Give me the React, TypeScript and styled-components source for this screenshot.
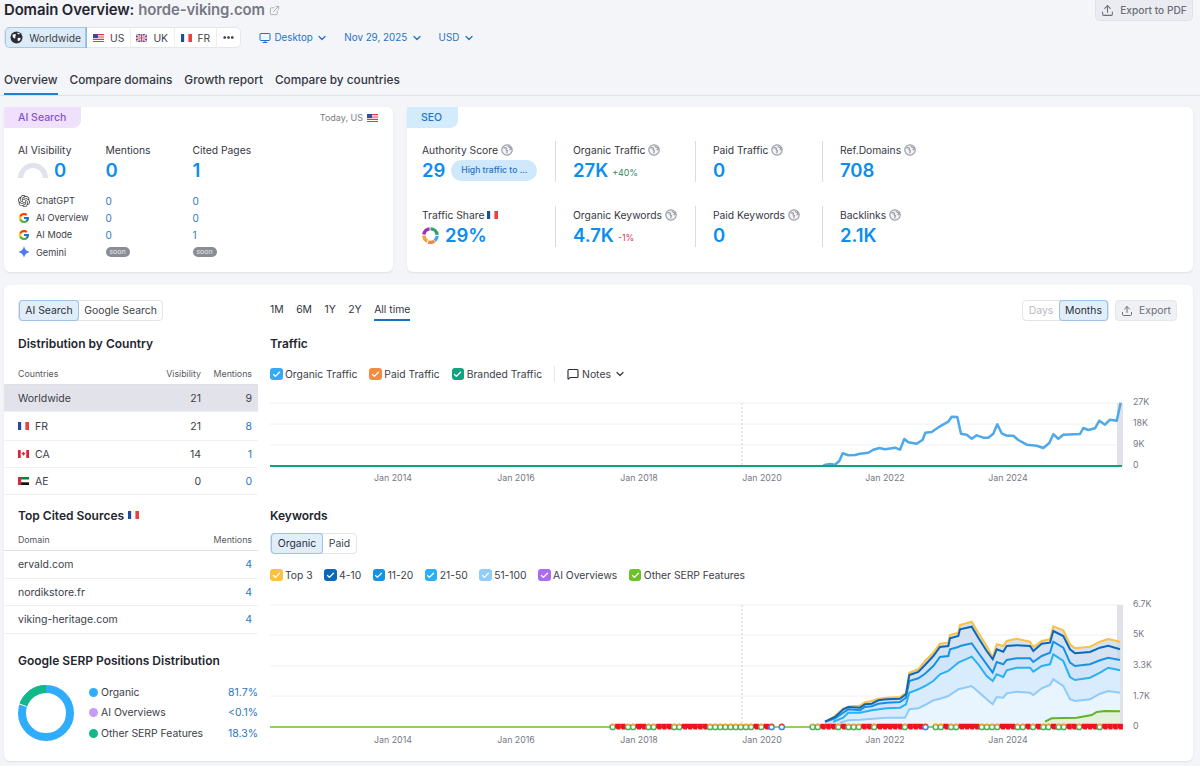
import React from "react";
import styled, { createGlobalStyle } from "styled-components";
import { Check, ChevronDown, Ellipsis, ExternalLink, MessageSquare, Monitor, Upload } from "lucide-react";
import { FcGoogle } from "react-icons/fc";
import { SiOpenai } from "react-icons/si";

const Global = createGlobalStyle`
  html, body { margin: 0; padding: 0; background: #f4f5f9; }
  body { font-family: Inter, "Noto Sans", "Liberation Sans", sans-serif; color: #2b2e38; width: 1200px; height: 766px; overflow: hidden; }
  * { box-sizing: border-box; }
`;

const Page = styled.div`
  display: flex;
  flex-direction: column;
  width: 1200px;
  height: 766px;
  overflow: hidden;
`;
const Header = styled.header`
  padding: 0 7px 0 4px;
  height: 96px;
  border-bottom: 1px solid #dfe1e8;
`;
const TitleRow = styled.div`
  display: flex;
  justify-content: space-between;
  align-items: flex-start;
  height: 27px;
`;
const Title = styled.h1`
  margin: 0;
  display: flex;
  align-items: center;
  gap: 4px;
  height: 20px;
  font-size: 14.9px;
  font-weight: 600;
  letter-spacing: -0.1px;
  color: #24262f;
`;
const Domain = styled.span`
  color: #757884;
`;
const PdfButton = styled.button`
  display: flex;
  align-items: center;
  justify-content: center;
  gap: 6px;
  width: 98px;
  height: 21px;
  padding: 0;
  white-space: nowrap;
  border: 1px solid #e0e1e8;
  border-top: 0;
  border-radius: 0 0 5px 5px;
  background: #ebecf1;
  color: #6c6e79;
  font: 500 10.2px Inter, sans-serif;
`;
const FilterRow = styled.div`
  display: flex;
  align-items: center;
  height: 21px;
`;
const Segments = styled.div`
  display: flex;
  width: 237px;
  height: 21px;
  margin-right: 18px;
  background: #fff;
  border-radius: 5px;
  border: 1px solid #e4e6ec;
`;
const Segment = styled.div<{ $active?: boolean; $w: number }>`
  display: flex;
  align-items: center;
  justify-content: center;
  gap: 6px;
  width: ${(p) => p.$w}px;
  height: 21px;
  margin-top: -1px;
  font-size: 10.3px;
  color: #3c3f4a;
  border-right: 1px solid ${(p) => (p.$active ? "#8bb8e0" : "#eceef2")};
  background: ${(p) => (p.$active ? "#dcebf8" : "transparent")};
  border-radius: ${(p) => (p.$active ? "5px 0 0 5px" : "0")};
  box-shadow: ${(p) => (p.$active ? "inset 0 0 0 1px #a5c8e8" : "none")};
  &:last-child { border-right: 0; }
`;
const DropDown = styled.div<{ $mr: number }>`
  display: flex;
  align-items: center;
  gap: 3.5px;
  margin-right: ${(p) => p.$mr}px;
  color: #1f73c4;
  font-size: 9.8px;
`;
const Tabs = styled.nav`
  display: flex;
  gap: 12px;
  margin-top: 21px;
`;
const Tab = styled.div<{ $active?: boolean }>`
  height: 26px;
  padding-top: 4px;
  font-size: 11.8px;
  font-weight: 500;
  color: #33353f;
  border-bottom: 2px solid ${(p) => (p.$active ? "#1f7fd0" : "transparent")};
`;
const CardRow = styled.div`
  display: flex;
  gap: 14px;
  padding: 11px 7px 0 4px;
`;
const Card = styled.section<{ $w: number }>`
  position: relative;
  width: ${(p) => p.$w}px;
  height: 165px;
  background: #fff;
  border-radius: 6px;
  box-shadow: 0 1px 2px rgba(40, 45, 70, 0.1);
`;
const Tag = styled.div<{ $bg: string; $c: string; $w: number }>`
  display: flex;
  align-items: center;
  padding-left: 14px;
  width: ${(p) => p.$w}px;
  height: 21px;
  background: ${(p) => p.$bg};
  color: ${(p) => p.$c};
  font-size: 10.5px;
  font-weight: 500;
  border-radius: 0 0 8px 0;
`;
const Today = styled.div`
  position: absolute;
  top: 5px;
  right: 15px;
  display: flex;
  align-items: center;
  gap: 4px;
  font-size: 9px;
  color: #7b7d88;
`;
const AiGrid = styled.div`
  display: grid;
  grid-template-columns: 87.5px 87px 87px;
  padding: 13px 0 0 14px;
`;
const Label = styled.div`
  display: flex;
  align-items: center;
  gap: 3px;
  height: 17px;
  font-size: 10.3px;
  color: #35373f;
  white-space: nowrap;
`;
const BigValue = styled.div`
  display: flex;
  align-items: center;
  gap: 6px;
  height: 24px;
  font-size: 18.5px;
  font-weight: 600;
  color: #0c8df0;
  line-height: 24px;
`;
const EngineRows = styled.div`
  display: grid;
  grid-template-columns: 87.5px 87px 87px;
  grid-auto-rows: 17.2px;
  padding: 10px 0 0 14px;
  font-size: 9.2px;
`;
const Engine = styled.div`
  display: flex;
  align-items: center;
  gap: 6px;
  color: #3c3e48;
`;
const EngineLink = styled.div`
  display: flex;
  align-items: center;
  color: #2a78c4;
  font-size: 10px;
`;
const Soon = styled.span`
  display: inline-block;
  width: 24px;
  height: 10px;
  line-height: 10px;
  text-align: center;
  background: #8a8c96;
  color: #e9e9ee;
  border-radius: 5px;
  font-size: 7px;
`;
const SeoGrid = styled.div`
  display: grid;
  grid-template-columns: 133px 140px 127px 150px;
  grid-auto-rows: 41px;
  row-gap: 24px;
  padding: 13px 0 0 15px;
`;
const SeoCell = styled.div<{ $line?: boolean }>`
  padding-left: ${(p) => (p.$line ? "17px" : "0")};
  border-left: ${(p) => (p.$line ? "1px solid #d9dbe2" : "0")};
`;
const Pill = styled.span`
  display: flex;
  align-items: center;
  justify-content: center;
  width: 86px;
  height: 21px;
  border-radius: 11px;
  background: #cfe8fb;
  color: #1f73c4;
  font-size: 8.6px;
  font-weight: 500;
`;
const Delta = styled.span<{ $c: string }>`
  font-size: 8.8px;
  font-weight: 400;
  margin-left: -2px;
  margin-top: 5px;
  color: ${(p) => p.$c};
`;
const InfoMark = styled.svg`
  width: 12px;
  height: 12px;
  flex: none;
`;
const Main = styled.section`
  display: flex;
  margin: 13px 7px 0 4px;
  height: 476px;
  background: #fff;
  border-radius: 6px;
  box-shadow: 0 1px 2px rgba(40, 45, 70, 0.1);
`;
const LeftCol = styled.div`
  width: 254px;
  flex: none;
  padding-top: 15px;
`;
const Inset = styled.div`
  padding-left: 14px;
`;
const Toggle = styled.div`
  display: flex;
  width: fit-content;
  height: 21px;
  background: #fff;
  border: 1px solid #e2e4ea;
  border-radius: 4px;
`;
const ToggleItem = styled.div<{ $active?: boolean; $muted?: boolean; $w: number }>`
  display: flex;
  align-items: center;
  justify-content: center;
  width: ${(p) => p.$w}px;
  margin: -1px 0;
  font-size: 10.4px;
  color: ${(p) => (p.$muted ? "#b7b9c0" : p.$active ? "#2b2e38" : "#3c3f4a")};
  background: ${(p) => (p.$active ? "#e1eefa" : "transparent")};
  box-shadow: ${(p) => (p.$active ? "inset 0 0 0 1px #9cc3e6" : "none")};
  border-radius: 4px;
`;
const SectionTitle = styled.h2<{ $mt: number }>`
  display: flex;
  align-items: center;
  gap: 4px;
  margin: ${(p) => p.$mt}px 0 0;
  height: 16px;
  font-size: 12px;
  font-weight: 600;
  color: #24262f;
`;
const TableHead = styled.div<{ $mt: number; $h: number }>`
  display: grid;
  grid-template-columns: 1fr 60px 51px;
  align-items: center;
  height: ${(p) => p.$h}px;
  margin-top: ${(p) => p.$mt}px;
  padding: 0 6px 0 14px;
  font-size: 8.8px;
  color: #565862;
  border-bottom: 1px solid #dee0e6;
  text-align: right;
  & > :first-child { text-align: left; }
`;
const TableRow = styled.div<{ $active?: boolean; $h: number }>`
  display: grid;
  grid-template-columns: 1fr 60px 51px;
  align-items: center;
  height: ${(p) => p.$h}px;
  padding: 0 6px 0 14px;
  font-size: 10.5px;
  color: #3c3e48;
  background: ${(p) => (p.$active ? "#e2e3ea" : "#fff")};
  border-bottom: 1px solid #eff0f3;
  text-align: right;
`;
const RowName = styled.div`
  display: flex;
  align-items: center;
  gap: 6px;
  text-align: left;
`;
const RowLink = styled.div<{ $plain?: boolean }>`
  color: ${(p) => (p.$plain ? "#3c3e48" : "#2a78c4")};
`;
const Donut = styled.div`
  display: flex;
  align-items: center;
  gap: 15px;
  margin-top: 14px;
  padding: 0 0 0 14px;
`;
const Legend = styled.div`
  display: grid;
  grid-template-columns: 1fr auto;
  grid-auto-rows: 20.6px;
  flex: 1;
  align-items: center;
`;
const LegendName = styled.div`
  display: flex;
  align-items: center;
  gap: 3px;
  font-size: 10.4px;
  color: #3c3e48;
`;
const Dot = styled.i<{ $c: string }>`
  width: 9px;
  height: 9px;
  border-radius: 50%;
  background: ${(p) => p.$c};
`;
const LegendValue = styled.div`
  font-size: 10.5px;
  color: #2a78c4;
  text-align: right;
`;
const RightCol = styled.div`
  flex: 1;
  padding: 15px 16px 0 12px;
`;
const TopBar = styled.div`
  display: flex;
  justify-content: space-between;
  height: 21px;
`;
const Ranges = styled.div`
  display: flex;
  gap: 12.5px;
`;
const Range = styled.div<{ $active?: boolean }>`
  height: 21px;
  padding-top: 3px;
  font-size: 10.4px;
  color: #33353f;
  border-bottom: ${(p) => (p.$active ? "2px solid #1a6fc0" : "0")};
`;
const Actions = styled.div`
  display: flex;
  gap: 6px;
`;
const ExportButton = styled.div`
  display: flex;
  align-items: center;
  justify-content: center;
  gap: 6px;
  width: 62px;
  height: 21px;
  border-radius: 4px;
  background: #f0f1f5;
  border: 1px solid #e6e7ec;
  color: #6c6e79;
  font-size: 10.4px;
`;
const Checks = styled.div<{ $mt: number; $gap: number }>`
  display: flex;
  align-items: center;
  gap: ${(p) => p.$gap}px;
  height: 16px;
  margin-top: ${(p) => p.$mt}px;
`;
const CheckItem = styled.div`
  display: flex;
  align-items: center;
  gap: 2.5px;
  font-size: 10.3px;
  color: #3c3e48;
`;
const Box = styled.span<{ $c: string }>`
  display: flex;
  align-items: center;
  justify-content: center;
  width: 12.5px;
  height: 12.5px;
  border-radius: 3px;
  background: ${(p) => p.$c};
  color: #fff;
`;
const Notes = styled.div`
  display: flex;
  align-items: center;
  gap: 3px;
  padding-left: 12px;
  height: 16px;
  border-left: 1px solid #e5e6eb;
  font-size: 10.4px;
  color: #3c3e48;
`;
const Chart = styled.svg<{ $mt: number }>`
  display: block;
  margin-top: ${(p) => p.$mt}px;
`;
const SvgLabel = styled.text<{ $mid?: boolean }>`
  font-family: Inter, sans-serif;
  font-size: 8.8px;
  fill: #767883;
  text-anchor: ${(p) => (p.$mid ? "middle" : "start")};
`;

const Info = () => (
  <InfoMark viewBox="0 0 12 12">
    <circle cx="6" cy="6" r="5.200" fill="#f4f4f6" stroke="#9a9ca6" strokeWidth="1.200" />
    <path d="M2.500 4.200c1.200-.8 2.200-.6 3 .2l-.4 1.300 1.300 1-.8 2.600M7 2c.2 1 1 1.600 2.200 1.600l.9 1.400-1.500 1" fill="none" stroke="#9a9ca6" strokeWidth="1.200" />
  </InfoMark>
);
const Flag = ({ c }: { c: "US" | "UK" | "FR" | "CA" | "AE" }) => (
  <svg width="11" height="8" viewBox="0 0 11 8" style={{ flex: "none" }}>
    {c === "US" && (<>
      <rect width="11" height="8" fill="#fff" />
      <path d="M0 0h11v1.200H0zM0 2.400h11v1.200H0zM0 4.800h11V6H0zM0 6.900h11V8H0z" fill="#dc3c4a" />
      <rect width="5" height="4" fill="#3b4a9c" />
    </>)}
    {c === "UK" && (<>
      <rect width="11" height="8" fill="#47509a" />
      <path d="M0 0l11 8M11 0L0 8" stroke="#fff" strokeWidth="1.500" />
      <path d="M0 0l11 8M11 0L0 8" stroke="#d8455a" strokeWidth=".5" />
      <path d="M5.500 0v8M0 4h11" stroke="#fff" strokeWidth="2.200" />
      <path d="M5.500 0v8M0 4h11" stroke="#d8455a" strokeWidth="1.100" />
    </>)}
    {c === "FR" && (<>
      <rect width="3.400" height="8" fill="#1f4ba5" />
      <rect x="3.400" width="3.600" height="8" fill="#fff" />
      <rect x="7.400" width="3.600" height="8" fill="#e8413e" />
    </>)}
    {c === "CA" && (<>
      <rect width="11" height="8" fill="#fff" />
      <rect width="2.700" height="8" fill="#e01f3d" />
      <rect x="8.300" width="2.700" height="8" fill="#e01f3d" />
      <path d="M5.500 1.500l.8 1.500 1-.4-.4 2H6v1H5v-1H3.900l-.4-2 1 .4z" fill="#e01f3d" />
    </>)}
    {c === "AE" && (<>
      <rect width="11" height="2.700" fill="#00843d" />
      <rect y="2.700" width="11" height="2.600" fill="#fff" />
      <rect y="5.300" width="11" height="2.700" fill="#111" />
      <rect width="3.200" height="8" fill="#d8283b" />
    </>)}
  </svg>
);
const Globe = () => (
  <svg width="13" height="13" viewBox="0 0 13 13">
    <circle cx="6.500" cy="6.500" r="6" fill="#2c2e3a" />
    <path d="M2.500 4c1.500-1.200 3-1.200 3.400-.2.3 1-.9 1.300-.6 2.500.3 1-.4 1.500-1.200.9C3 6.500 2.400 5.400 2.500 4zM8 7c1.200-.5 2.500-.2 2.800.3-.3 1.500-1.400 2.700-2.300 3-.9-.5-1.200-2.600-.5-3.300zM7.400 1.400c1 .1 2 .6 2.500 1.300-.4.7-1.600.7-2.300.2z" fill="#fff" />
  </svg>
);
const Arc = () => (
  <svg width="30" height="17" viewBox="0 0 30 17" style={{ flex: "none", marginTop: 3 }}>
    <path d="M2.500 15a12.500 12.500 0 0 1 25 0" fill="none" stroke="#e1e3ea" strokeWidth="5" />
  </svg>
);
const Gemini = () => (
  <svg width="12" height="12" viewBox="0 0 12 12" style={{ flex: "none" }}>
    <path d="M6 0c.5 3.300 2.700 5.500 6 6-3.300.5-5.500 2.700-6 6-.5-3.300-2.700-5.500-6-6 3.300-.5 5.500-2.700 6-6z" fill="#5079ee" />
  </svg>
);
const ShareDonut = () => (
  <svg width="17" height="17" viewBox="0 0 18 18" style={{ flex: "none" }}>
    <g fill="none" strokeWidth="3.600">
      <path d="M9 2a7 7 0 0 1 7 6.300" stroke="#2fa36b" />
      <path d="M16 9.500a7 7 0 0 1-2.500 5" stroke="#41a7ef" />
      <path d="M13 15a7 7 0 0 1-6.500 .7" stroke="#f28a3d" />
      <path d="M5.500 15a7 7 0 0 1-3.500-6" stroke="#f2a33d" />
      <path d="M2 8a7 7 0 0 1 6-6" stroke="#a232b5" />
    </g>
  </svg>
);

const year = (y: number) => 393 + (y - 2014) * 61.5;
const yearLabels = [2014, 2016, 2018, 2020, 2022, 2024];

const trafficZoom: number[][] = [[130,541],[150,537],[165,539],[178,528],[188,505],[205,511],[225,510],[240,506],[265,503],[280,494],[298,489],[315,493],[345,488],[360,494],[373,462],[385,472],[410,476],[428,464],[436,443],[455,441],[480,424],[505,410],[515,395],[532,396],[543,446],[560,449],[575,461],[590,451],[610,458],[625,458],[640,446],[652,418],[665,445],[680,452],[700,452],[715,465],[740,479],[770,482],[790,489],[808,474],[820,448],[835,461],[850,449],[900,447],[910,429],[925,435],[945,430],[958,407],[975,419],[990,404],[1010,407],[1022,353]];

/* Traffic chart: svg origin is at page (270, 396) */
const trafficPts = trafficZoom.map(([x, y]) => `${(780 + x / 3 - 270).toFixed(1)},${(285 + y / 3 - 396).toFixed(1)}`).join(" ");

const kwTop: number[][] = [[75,362],[105,345],[130,322],[150,316],[180,314],[195,304],[215,300],[235,293],[260,290],[300,288],[318,275],[328,215],[355,205],[375,180],[400,155],[420,128],[445,125],[450,102],[475,95],[480,72],[515,62],[535,95],[560,135],[578,170],[590,130],[610,135],[620,120],[650,113],[690,122],[700,138],[725,120],[750,115],[760,76],[790,88],[810,130],[825,142],[870,137],[900,122],[925,114],[960,122]];
const kw410: number[][] = [[75,362],[105,348],[130,325],[145,318],[180,320],[195,310],[215,308],[235,298],[260,295],[300,293],[318,280],[328,222],[355,213],[375,192],[400,165],[420,138],[445,135],[450,112],[475,105],[480,85],[515,77],[535,110],[560,150],[578,175],[590,145],[610,152],[620,135],[650,133],[690,135],[700,150],[725,128],[750,125],[760,90],[790,105],[810,145],[825,157],[870,153],[900,140],[925,134],[960,145]];
const kw1120: number[][] = [[75,362],[105,352],[130,335],[145,325],[180,328],[195,318],[215,316],[235,308],[260,305],[300,303],[318,290],[328,240],[355,232],[375,218],[400,195],[420,168],[445,165],[450,145],[475,138],[480,135],[515,127],[535,155],[560,190],[578,215],[590,183],[610,190],[620,177],[650,172],[690,172],[700,183],[725,165],[750,155],[760,122],[790,140],[810,185],[825,195],[870,190],[900,178],[925,170],[960,177]];
const kw2150: number[][] = [[100,362],[130,350],[145,335],[180,335],[215,328],[260,322],[300,320],[318,310],[328,275],[355,265],[375,255],[400,240],[420,220],[445,210],[475,185],[515,167],[535,190],[560,225],[578,240],[590,220],[610,228],[620,208],[650,200],[690,200],[700,212],[725,195],[750,190],[760,160],[790,180],[810,228],[825,237],[870,230],[900,215],[925,200],[960,208]];
const kw51: number[][] = [[120,365],[145,358],[180,356],[260,350],[315,350],[328,325],[355,322],[375,312],[400,298],[420,293],[445,285],[475,265],[515,255],[535,272],[560,295],[578,310],[590,288],[610,290],[620,277],[650,272],[690,275],[700,282],[725,262],[750,252],[760,235],[790,255],[810,295],[825,300],[870,295],[900,278],[925,270],[960,275]];
const kwGreen: number[][] = [[735,362],[755,352],[830,350],[875,342],[890,333],[915,330],[960,331]];

/* Keywords chart: svg origin is at page (270, 596) */
const kx = (x: number) => +(800 + x / 3 - 270).toFixed(1);
const ky = (y: number) => +(600 + y / 3 - 596).toFixed(1);
const BASE = 130;
const kwLine = (a: number[][]) => a.map(([x, y]) => `${kx(x)},${ky(y)}`).join(" ");
const kwArea = (a: number[][]) => `${kx(a[0][0])},${BASE} ${kwLine(a)} ${kx(a[a.length - 1][0])},${BASE}`;

const SERP_A = "GFFGGFFGGFFFGGFFFFFGGGGGGGGGFGFB.B";
const SERP_B = "GGFFFGFGGGFFGFFFFFGFFFB.GGFGGFFFFGGGGFFFGGFGFGGFGGFFGFFFGFFFF";

const Serp = ({ kind, x }: { kind: string; x: number }) => {
  if (kind === "F") {
    return <path d={`M${x - 2.600} ${BASE - 3.300}h5.300v5.800h-3.600l-1.700-2z`} fill="#f2101c" />;
  }
  const main = kind === "B" ? "#3f82ee" : "#4fae58";
  const top = kind === "B" ? "#e4463c" : "#e8a83a";
  return (
    <g fill="#fff" strokeWidth="1.500">
      <circle cx={x} cy={BASE} r="2.600" stroke={main} />
      <path d={`M${x - 2} ${BASE - 1.700}a2.600 2.600 0 0 1 4 0`} fill="none" stroke={top} />
    </g>
  );
};

const Vert = ({ h, bottom }: { h: number; bottom: number }) => (
  <rect x="847" y={bottom - h} width="6" height={h} fill="#dfe3e7" />
);

export default function App() {
  const boxCheck = <Check size={9} strokeWidth={3.500} />;
  return (
    <Page>
      <Global />
      <Header>
        <TitleRow>
          <Title>
            Domain Overview: <Domain>horde-viking.com</Domain>
            <ExternalLink size={11} color="#a9abb4" />
          </Title>
          <PdfButton><Upload size={13} />Export to PDF</PdfButton>
        </TitleRow>
        <FilterRow>
          <Segments>
            <Segment $active $w={83}><Globe />Worldwide</Segment>
            <Segment $w={44}><Flag c="US" />US</Segment>
            <Segment $w={44}><Flag c="UK" />UK</Segment>
            <Segment $w={43}><Flag c="FR" />FR</Segment>
            <Segment $w={23}><Ellipsis size={13} color="#24262f" strokeWidth={3} /></Segment>
          </Segments>
          <DropDown $mr={16}><Monitor size={12} />Desktop<ChevronDown size={12} strokeWidth={2.500} /></DropDown>
          <DropDown $mr={16}>Nov 29, 2025<ChevronDown size={12} strokeWidth={2.500} /></DropDown>
          <DropDown $mr={0}>USD<ChevronDown size={12} strokeWidth={2.500} /></DropDown>
        </FilterRow>
        <Tabs>
          <Tab $active>Overview</Tab>
          <Tab>Compare domains</Tab>
          <Tab>Growth report</Tab>
          <Tab>Compare by countries</Tab>
        </Tabs>
      </Header>

      <CardRow>
        <Card $w={389}>
          <Tag $bg="#efe0fb" $c="#8a50d8" $w={77}>AI Search</Tag>
          <Today>Today, US <Flag c="US" /></Today>
          <AiGrid>
            <Label>AI Visibility</Label>
            <Label>Mentions</Label>
            <Label>Cited Pages</Label>
            <BigValue><Arc />0</BigValue>
            <BigValue>0</BigValue>
            <BigValue>1</BigValue>
          </AiGrid>
          <EngineRows>
            <Engine><SiOpenai size={12} color="#3a3a3a" />ChatGPT</Engine>
            <EngineLink>0</EngineLink>
            <EngineLink>0</EngineLink>
            <Engine><FcGoogle size={12} />AI Overview</Engine>
            <EngineLink>0</EngineLink>
            <EngineLink>0</EngineLink>
            <Engine><FcGoogle size={12} />AI Mode</Engine>
            <EngineLink>0</EngineLink>
            <EngineLink>1</EngineLink>
            <Engine><Gemini />Gemini</Engine>
            <EngineLink><Soon>soon</Soon></EngineLink>
            <EngineLink><Soon>soon</Soon></EngineLink>
          </EngineRows>
        </Card>
        <Card $w={786}>
          <Tag $bg="#d3ebfc" $c="#1f73c4" $w={51}>SEO</Tag>
          <SeoGrid>
            <SeoCell><Label>Authority Score <Info /></Label><BigValue>29<Pill>High traffic to ...</Pill></BigValue></SeoCell>
            <SeoCell $line><Label>Organic Traffic <Info /></Label><BigValue>27K<Delta $c="#2a8a5c">+40%</Delta></BigValue></SeoCell>
            <SeoCell $line><Label>Paid Traffic <Info /></Label><BigValue>0</BigValue></SeoCell>
            <SeoCell $line><Label>Ref.Domains <Info /></Label><BigValue>708</BigValue></SeoCell>
            <SeoCell><Label>Traffic Share <Flag c="FR" /></Label><BigValue><ShareDonut />29%</BigValue></SeoCell>
            <SeoCell $line><Label>Organic Keywords <Info /></Label><BigValue>4.7K<Delta $c="#d2335c">-1%</Delta></BigValue></SeoCell>
            <SeoCell $line><Label>Paid Keywords <Info /></Label><BigValue>0</BigValue></SeoCell>
            <SeoCell $line><Label>Backlinks <Info /></Label><BigValue>2.1K</BigValue></SeoCell>
          </SeoGrid>
        </Card>
      </CardRow>

      <Main>
        <LeftCol>
          <Inset>
            <Toggle>
              <ToggleItem $active $w={60}>AI Search</ToggleItem>
              <ToggleItem $w={83}>Google Search</ToggleItem>
            </Toggle>
            <SectionTitle $mt={14}>Distribution by Country</SectionTitle>
          </Inset>
          <TableHead $mt={12} $h={22}>
            <div>Countries</div><div>Visibility</div><div>Mentions</div>
          </TableHead>
          <TableRow $active $h={27}><RowName>Worldwide</RowName><div>21</div><RowLink $plain>9</RowLink></TableRow>
          <TableRow $h={29}><RowName><Flag c="FR" />FR</RowName><div>21</div><RowLink>8</RowLink></TableRow>
          <TableRow $h={27}><RowName><Flag c="CA" />CA</RowName><div>14</div><RowLink>1</RowLink></TableRow>
          <TableRow $h={27}><RowName><Flag c="AE" />AE</RowName><div>0</div><RowLink>0</RowLink></TableRow>
          <Inset>
            <SectionTitle $mt={12}><span>Top Cited Sources</span><Flag c="FR" /></SectionTitle>
          </Inset>
          <TableHead $mt={5} $h={23}>
            <div>Domain</div><div /><div>Mentions</div>
          </TableHead>
          <TableRow $h={28}><RowName>ervald.com</RowName><div /><RowLink>4</RowLink></TableRow>
          <TableRow $h={27}><RowName>nordikstore.fr</RowName><div /><RowLink>4</RowLink></TableRow>
          <TableRow $h={28}><RowName>viking-heritage.com</RowName><div /><RowLink>4</RowLink></TableRow>
          <Inset>
            <SectionTitle $mt={18}>Google SERP Positions Distribution</SectionTitle>
          </Inset>
          <Donut>
            <svg width="56" height="56" viewBox="0 0 56 56" style={{ flex: "none" }}>
              <circle cx="28" cy="28" r="24" fill="none" stroke="#2fadfc" strokeWidth="8" />
              <path d="M28 4A24 24 0 0 0 5.100 20.800" fill="none" stroke="#12b885" strokeWidth="8" />
              <path d="M8.500 21.500l-7.500-2.600" stroke="#fff" strokeWidth="1" />
            </svg>
            <Legend>
              <LegendName><Dot $c="#2fadfc" />Organic</LegendName><LegendValue>81.7%</LegendValue>
              <LegendName><Dot $c="#c79cf7" />AI Overviews</LegendName><LegendValue>&lt;0.1%</LegendValue>
              <LegendName><Dot $c="#12b885" />Other SERP Features</LegendName><LegendValue>18.3%</LegendValue>
            </Legend>
          </Donut>
        </LeftCol>

        <RightCol>
          <TopBar>
            <Ranges>
              <Range>1M</Range><Range>6M</Range><Range>1Y</Range><Range>2Y</Range><Range $active>All time</Range>
            </Ranges>
            <Actions>
              <Toggle>
                <ToggleItem $muted $w={36}>Days</ToggleItem>
                <ToggleItem $active $w={49}>Months</ToggleItem>
              </Toggle>
              <ExportButton><Upload size={12} />Export</ExportButton>
            </Actions>
          </TopBar>
          <SectionTitle $mt={14}>Traffic</SectionTitle>
          <Checks $mt={15} $gap={12}>
            <CheckItem><Box $c="#36a9f4">{boxCheck}</Box>Organic Traffic</CheckItem>
            <CheckItem><Box $c="#f58b42">{boxCheck}</Box>Paid Traffic</CheckItem>
            <CheckItem><Box $c="#0fa37f">{boxCheck}</Box>Branded Traffic</CheckItem>
            <Notes><MessageSquare size={12} color="#2b2e38" strokeWidth={2.300} />Notes<ChevronDown size={12} strokeWidth={2.500} /></Notes>
          </Checks>
          <Chart $mt={14} width="907" height="90" viewBox="0 0 907 90">
            {[7, 28, 49].map((y) => <line key={y} x1="0" x2="852" y1={y} y2={y} stroke="#eff0f3" />)}
            <line x1="472" x2="472" y1="7" y2="70" stroke="#cfd1d6" strokeDasharray="2 2" />
            <Vert h={63} bottom={70} />
            <polyline points={trafficPts} fill="none" stroke="#4ea8ea" strokeWidth="2.500" strokeLinejoin="round" />
            <line x1="0" x2="852" y1="70" y2="70" stroke="#13a17c" strokeWidth="2.200" />
            {yearLabels.map((y) => <SvgLabel key={y} $mid x={year(y) - 270} y="85">Jan {y}</SvgLabel>)}
            <SvgLabel x="863" y="9">27K</SvgLabel>
            <SvgLabel x="863" y="30">18K</SvgLabel>
            <SvgLabel x="863" y="51">9K</SvgLabel>
            <SvgLabel x="863" y="72">0</SvgLabel>
          </Chart>
          <SectionTitle $mt={21}>Keywords</SectionTitle>
          <Checks $mt={12} $gap={0}>
            <Toggle>
              <ToggleItem $active $w={52}>Organic</ToggleItem>
              <ToggleItem $w={33}>Paid</ToggleItem>
            </Toggle>
          </Checks>
          <Checks $mt={16} $gap={11.500}>
            <CheckItem><Box $c="#fbc044">{boxCheck}</Box>Top 3</CheckItem>
            <CheckItem><Box $c="#0b67b8">{boxCheck}</Box>4-10</CheckItem>
            <CheckItem><Box $c="#1492e6">{boxCheck}</Box>11-20</CheckItem>
            <CheckItem><Box $c="#2bb0f4">{boxCheck}</Box>21-50</CheckItem>
            <CheckItem><Box $c="#90cdf9">{boxCheck}</Box>51-100</CheckItem>
            <CheckItem><Box $c="#ad6cf0">{boxCheck}</Box>AI Overviews</CheckItem>
            <CheckItem><Box $c="#6cc02a">{boxCheck}</Box>Other SERP Features</CheckItem>
          </Checks>
          <Chart $mt={14} width="907" height="150" viewBox="0 0 907 150">
            {[8, 38, 69, 99].map((y) => <line key={y} x1="0" x2="852" y1={y} y2={y} stroke="#eff0f3" />)}
            <line x1="472" x2="472" y1="8" y2="130" stroke="#cfd1d6" strokeDasharray="2 2" />
            <Vert h={122} bottom={130} />
            <polygon points={kwArea(kwTop)} fill="#c6d8ee" opacity=".75" />
            <polygon points={kwArea(kw1120)} fill="#cfe6fb" opacity=".9" />
            <polygon points={kwArea(kw2150)} fill="#d8ecfd" />
            <polygon points={kwArea(kw51)} fill="#e8f4fe" />
            <polygon points={kwArea(kwGreen)} fill="#e2f1da" />
            <line x1="0" x2="842" y1="130" y2="130" stroke="#6cc02a" strokeWidth="1.600" />
            <polyline points={kwLine(kw51)} fill="none" stroke="#8fcbf7" strokeWidth="2" />
            <polyline points={kwLine(kw2150)} fill="none" stroke="#2bb0f4" strokeWidth="2" />
            <polyline points={kwLine(kw1120)} fill="none" stroke="#1492e6" strokeWidth="2" />
            <polyline points={kwLine(kwTop)} fill="none" stroke="#fbc044" strokeWidth="2" />
            <polyline points={kwLine(kw410)} fill="none" stroke="#0b67b8" strokeWidth="2" />
            <polyline points={kwLine(kwGreen)} fill="none" stroke="#63b32c" strokeWidth="2" />
            {SERP_A.split("").map((k, i) => k === "." ? null : <Serp key={`a${i}`} kind={k} x={342.700 + i * 5.125} />)}
            {SERP_B.split("").map((k, i) => k === "." ? null : <Serp key={`b${i}`} kind={k} x={542.700 + i * 5.125} />)}
            {yearLabels.map((y) => <SvgLabel key={y} $mid x={year(y) - 270} y="146">Jan {y}</SvgLabel>)}
            <SvgLabel x="863" y="10">6.7K</SvgLabel>
            <SvgLabel x="863" y="40">5K</SvgLabel>
            <SvgLabel x="863" y="71">3.3K</SvgLabel>
            <SvgLabel x="863" y="102">1.7K</SvgLabel>
            <SvgLabel x="863" y="132">0</SvgLabel>
          </Chart>
        </RightCol>
      </Main>
    </Page>
  );
}
